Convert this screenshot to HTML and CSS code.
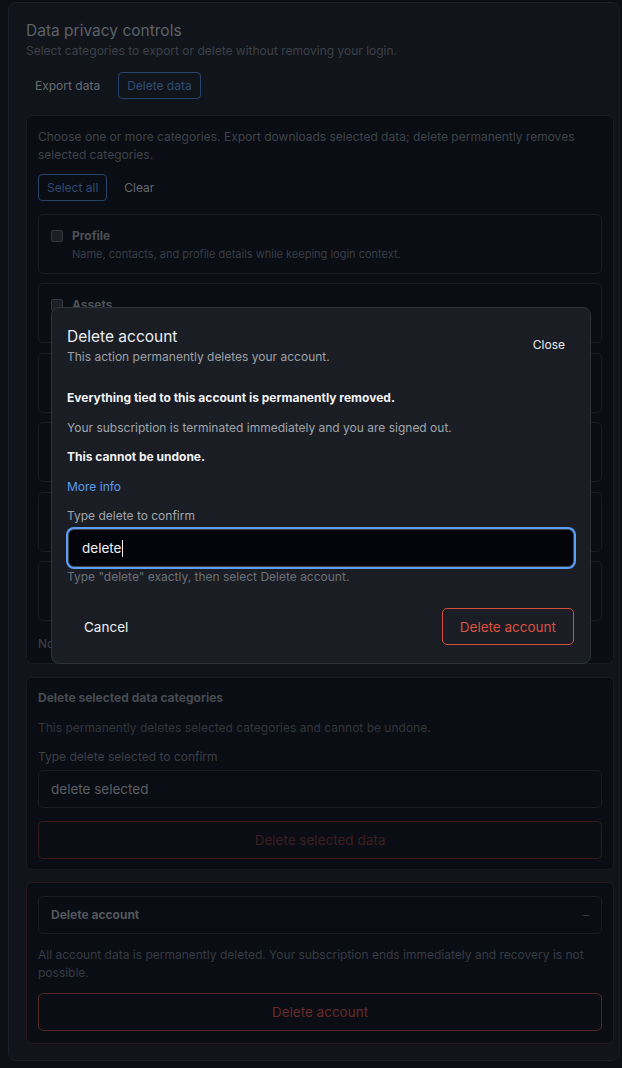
FILE: index.html
```html
<!DOCTYPE html>
<html lang="en">
<head>
  <meta charset="UTF-8">
  <title>Data privacy controls</title>
  <meta name="viewport" content="width=device-width, initial-scale=1">
  <link rel="stylesheet" href="styles.css">
</head>
<body>
  <main class="card">
    <h1 class="title">Data privacy controls</h1>
    <p class="subtitle">Select categories to export or delete without removing your login.</p>

    <div class="tabs">
      <button class="tab">Export data</button>
      <button class="tab active">Delete data</button>
    </div>

    <section class="panel categories">
      <p class="muted">Choose one or more categories. Export downloads selected data; delete permanently removes selected categories.</p>
      <div class="actions">
        <button class="btn-outline">Select all</button>
        <button class="btn-plain">Clear</button>
      </div>

      <ul class="cat-list">
        <li class="cat">
          <span class="checkbox"></span>
          <div>
            <strong>Profile</strong>
            <span class="desc">Name, contacts, and profile details while keeping login context.</span>
          </div>
        </li>
        <li class="cat">
          <span class="checkbox"></span>
          <div>
            <strong>Assets</strong>
            <span class="desc">Uploaded files, images, and attachments.</span>
          </div>
        </li>
        <li class="cat">
          <span class="checkbox"></span>
          <div>
            <strong>Activity</strong>
            <span class="desc">Usage history, sessions, and audit events.</span>
          </div>
        </li>
        <li class="cat">
          <span class="checkbox"></span>
          <div>
            <strong>Messages</strong>
            <span class="desc">Conversations, comments, and notifications.</span>
          </div>
        </li>
        <li class="cat">
          <span class="checkbox"></span>
          <div>
            <strong>Billing</strong>
            <span class="desc">Invoices, receipts, and payment history.</span>
          </div>
        </li>
        <li class="cat">
          <span class="checkbox"></span>
          <div>
            <strong>Preferences</strong>
            <span class="desc">Settings, integrations, and saved filters.</span>
          </div>
        </li>
      </ul>

      <p class="muted none">No categories selected.</p>
    </section>

    <section class="panel selected">
      <h2 class="panel-title">Delete selected data categories</h2>
      <p class="faint">This permanently deletes selected categories and cannot be undone.</p>
      <label class="field-label">Type delete selected to confirm</label>
      <div class="field">delete selected</div>
      <button class="btn-danger dim">Delete selected data</button>
    </section>

    <section class="panel danger-zone">
      <div class="collapse-head">
        <strong>Delete account</strong>
        <span class="dash">&ndash;</span>
      </div>
      <p class="faint">All account data is permanently deleted. Your subscription ends immediately and recovery is not possible.</p>
      <button class="btn-danger dim">Delete account</button>
    </section>
  </main>

  <div class="modal" role="dialog">
    <div class="modal-head">
      <div>
        <h3 class="modal-title">Delete account</h3>
        <p class="modal-sub">This action permanently deletes your account.</p>
      </div>
      <button class="close">Close</button>
    </div>

    <p class="strong">Everything tied to this account is permanently removed.</p>
    <p class="grey">Your subscription is terminated immediately and you are signed out.</p>
    <p class="strong">This cannot be undone.</p>
    <a class="link" href="#">More info</a>

    <label class="modal-label">Type delete to confirm</label>
    <div class="confirm-input">delete<span class="caret"></span></div>
    <p class="hint">Type "delete" exactly, then select Delete account.</p>

    <div class="modal-foot">
      <button class="cancel">Cancel</button>
      <button class="btn-danger live">Delete account</button>
    </div>
  </div>
</body>
</html>
```

FILE: styles.css
```css
* { box-sizing: border-box; }

body {
  margin: 2px 2px 8px 8px;
  background: #0d0f14;
  font-family: Inter, Roboto, "Liberation Sans", sans-serif;
  font-size: 12px;
  line-height: 18px;
  position: relative;
}

p, h1, h2, h3, ul { margin: 0; padding: 0; }

button {
  font-family: inherit;
  font-size: 12px;
  background: none;
  border: none;
  cursor: pointer;
}

.card {
  background: #11141a;
  border: 1px solid #1b1f27;
  border-radius: 8px;
  padding: 17px 5px 16px 17px;
}

.title {
  font-size: 15.5px;
  font-weight: 400;
  line-height: 22px;
  color: #5d6169;
}

.subtitle {
  color: #3c4149;
}

.tabs {
  display: flex;
  gap: 9px;
  margin-top: 12px;
  margin-bottom: 16px;
}

.tab {
  color: #676b72;
  padding: 0 8px;
  height: 27px;
  border: 1px solid transparent;
  border-radius: 4px;
}

.tab.active {
  color: #2e4c73;
  border-color: #27456a;
}

.panel {
  background: #0a0d13;
  border: 1px solid #181c24;
  border-radius: 6px;
  padding: 11px 11px 10px;
  margin-bottom: 13px;
}

.panel.categories { padding-top: 12px; }

.panel.selected { margin-bottom: 12px; }

.panel:last-child { margin-bottom: 0; }

.muted { color: #3e434b; }

.actions {
  display: flex;
  gap: 8px;
  margin-top: 10px;
  margin-bottom: 13px;
}

.btn-outline {
  color: #2d4a70;
  border: 1px solid #264367;
  border-radius: 4px;
  height: 27px;
  padding: 0 8px;
}

.btn-plain {
  color: #64686f;
  padding: 0 9px;
}

.cat-list {
  list-style: none;
  display: flex;
  flex-direction: column;
  gap: 9.4px;
}

.cat {
  display: flex;
  gap: 9px;
  border: 1px solid #181c25;
  border-radius: 5px;
  padding: 12px 12px 10px;
  height: 60px;
}

.checkbox {
  width: 12px;
  height: 12px;
  margin-top: 3px;
  border: 1px solid #33373e;
  border-radius: 2px;
  background: #1c1f25;
  flex: none;
}

.cat strong {
  display: block;
  color: #4b4f56;
  font-weight: 700;
}

.cat .desc {
  display: block;
  color: #393d45;
  font-size: 11px;
}

.none { margin-top: 14px; }

.panel-title {
  font-size: 12px;
  font-weight: 700;
  color: #474b52;
}

.faint {
  color: #32363d;
  margin-top: 12px;
}

.field-label {
  display: block;
  color: #3b3f46;
  margin-top: 11px;
}

.field {
  height: 38px;
  margin-top: 4px;
  border: 1px solid #1a1e27;
  border-radius: 5px;
  padding: 0 12px;
  display: flex;
  align-items: center;
  color: #595d65;
  font-size: 13.5px;
}

.btn-danger {
  height: 38px;
  border-radius: 5px;
  font-size: 13.5px;
}

.btn-danger.dim {
  width: 100%;
  margin-top: 13px;
  border: 1px solid #3a1a1c;
  color: #3d1f22;
}

.danger-zone {
  border-color: #261a1c;
  padding-top: 13px;
  padding-bottom: 12px;
}

.collapse-head {
  display: flex;
  justify-content: space-between;
  align-items: center;
  height: 38px;
  border: 1px solid #1a1e27;
  border-radius: 5px;
  padding: 0 12px;
}

.collapse-head strong { color: #52565d; }

.dash { color: #3a3e45; }

.danger-zone .faint { margin-top: 12px; color: #373b43; }

.danger-zone .btn-danger.dim {
  margin-top: 11px;
  border-color: #552626;
  color: #682b2b;
}

/* dialog over the dimmed page */
.modal {
  position: absolute;
  left: 43px;
  top: 305px;
  width: 540px;
  background: #1a1d24;
  border: 1px solid #2f333b;
  border-radius: 8px;
  padding: 18px 16px 18px 15px;
  display: flex;
  flex-direction: column;
}

.modal-head {
  display: flex;
  justify-content: space-between;
  align-items: center;
  margin-bottom: 23px;
}

.modal-title {
  font-size: 15.5px;
  font-weight: 400;
  line-height: 22px;
  color: #eceef1;
}

.modal-sub { color: #9ca1a8; }

.close {
  color: #e8eaed;
  padding: 6px 9px;
  margin-top: -4px;
}

.strong {
  color: #f1f3f5;
  font-weight: 700;
  margin-bottom: 12px;
}

.grey {
  color: #a0a5ac;
  margin-bottom: 11px;
}

.link {
  color: #5a9bef;
  text-decoration: none;
  margin-bottom: 11px;
}

.modal-label { color: #a0a5ac; }

.confirm-input {
  height: 38px;
  margin: 4px 0 0 1px;
  background: #03050a;
  border: 1px solid #40444c;
  border-radius: 6px;
  box-shadow: 0 0 0 2px #5c9ef7;
  padding: 0 13px;
  display: flex;
  align-items: center;
  color: #f2f3f5;
  font-size: 13.5px;
}

.caret {
  width: 1px;
  height: 17px;
  background: #f2f3f5;
  margin-left: 1px;
}

.hint {
  color: #6b7078;
  margin-top: 1px;
}

.modal-foot {
  display: flex;
  justify-content: space-between;
  align-items: center;
  margin-top: 22px;
}

.cancel {
  color: #eef0f2;
  font-size: 13.5px;
  padding: 0 17px;
  height: 37px;
}

.btn-danger.live {
  height: 37px;
  padding: 0 17px;
  border: 1px solid #d44f3d;
  color: #dc533f;
}
```
